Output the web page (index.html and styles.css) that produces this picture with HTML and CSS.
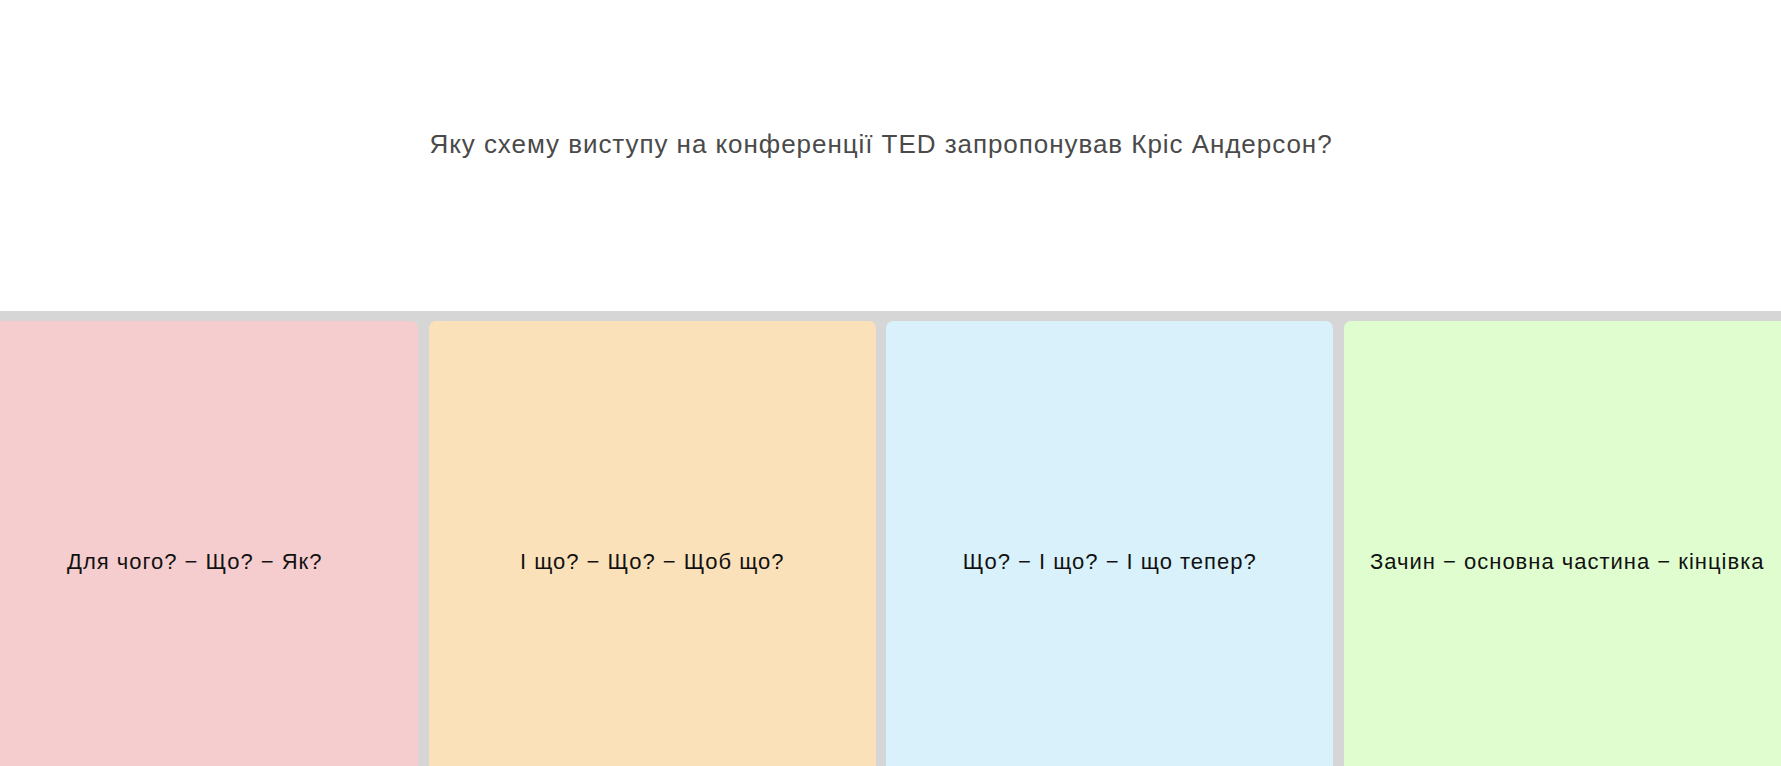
FILE: index.html
```html
<!DOCTYPE html>
<html>
    <head>
        <meta charset="utf-8" />
        <meta name="viewport" content="width=device-width, initial-scale=1" />
        <title>TED</title>
        <link rel="stylesheet" href="styles.css">
    </head>
    <body>
        <div class="quiz">
            <div class="question">
                <p>Яку схему виступу на конференції TED запропонував Кріс Андерсон?</p>
            </div>

            <div class="answers">
                <div class="answer red">Для чого? − Що? − Як?</div>
                <div class="answer orange">І що? − Що? − Щоб що?</div>
                <div class="answer blue">Що? − І що? − І що тепер?</div>
                <div class="answer green">Зачин − основна частина − кінцівка</div>
            </div>
        </div>
    </body>
</html>
```

FILE: styles.css
```css
body {
    margin: 0;
    padding: 0;
    font-family: "Liberation Sans", Arial, sans-serif;
    overflow: hidden;
}

.quiz {
    padding-right: 19px;
}

.question {
    height: 311px;
    display: flex;
    justify-content: center;
    align-items: flex-start;
}

.question p {
    margin: 0;
    padding-top: 129px;
    font-size: 26px;
    letter-spacing: 0.95px;
    color: #4a4a4a;
}

.answers {
    display: grid;
    grid-template-columns: repeat(4, 447px);
    column-gap: 10.5px;
    justify-content: center;
    padding-top: 10px;
    background-color: #d6d6d6;
    margin-right: -19px;
    padding-right: 19px;
}

.answer {
    height: 482px;
    border-radius: 7px;
    display: flex;
    align-items: center;
    justify-content: center;
    text-align: center;
    font-size: 22px;
    letter-spacing: 1px;
    color: #111;
}

.red {
    background-color: #f6cdce;
}

.orange {
    background-color: #fbe1b9;
}

.blue {
    background-color: #d9f1fb;
}

.green {
    background-color: #e0fdd0;
}
```
